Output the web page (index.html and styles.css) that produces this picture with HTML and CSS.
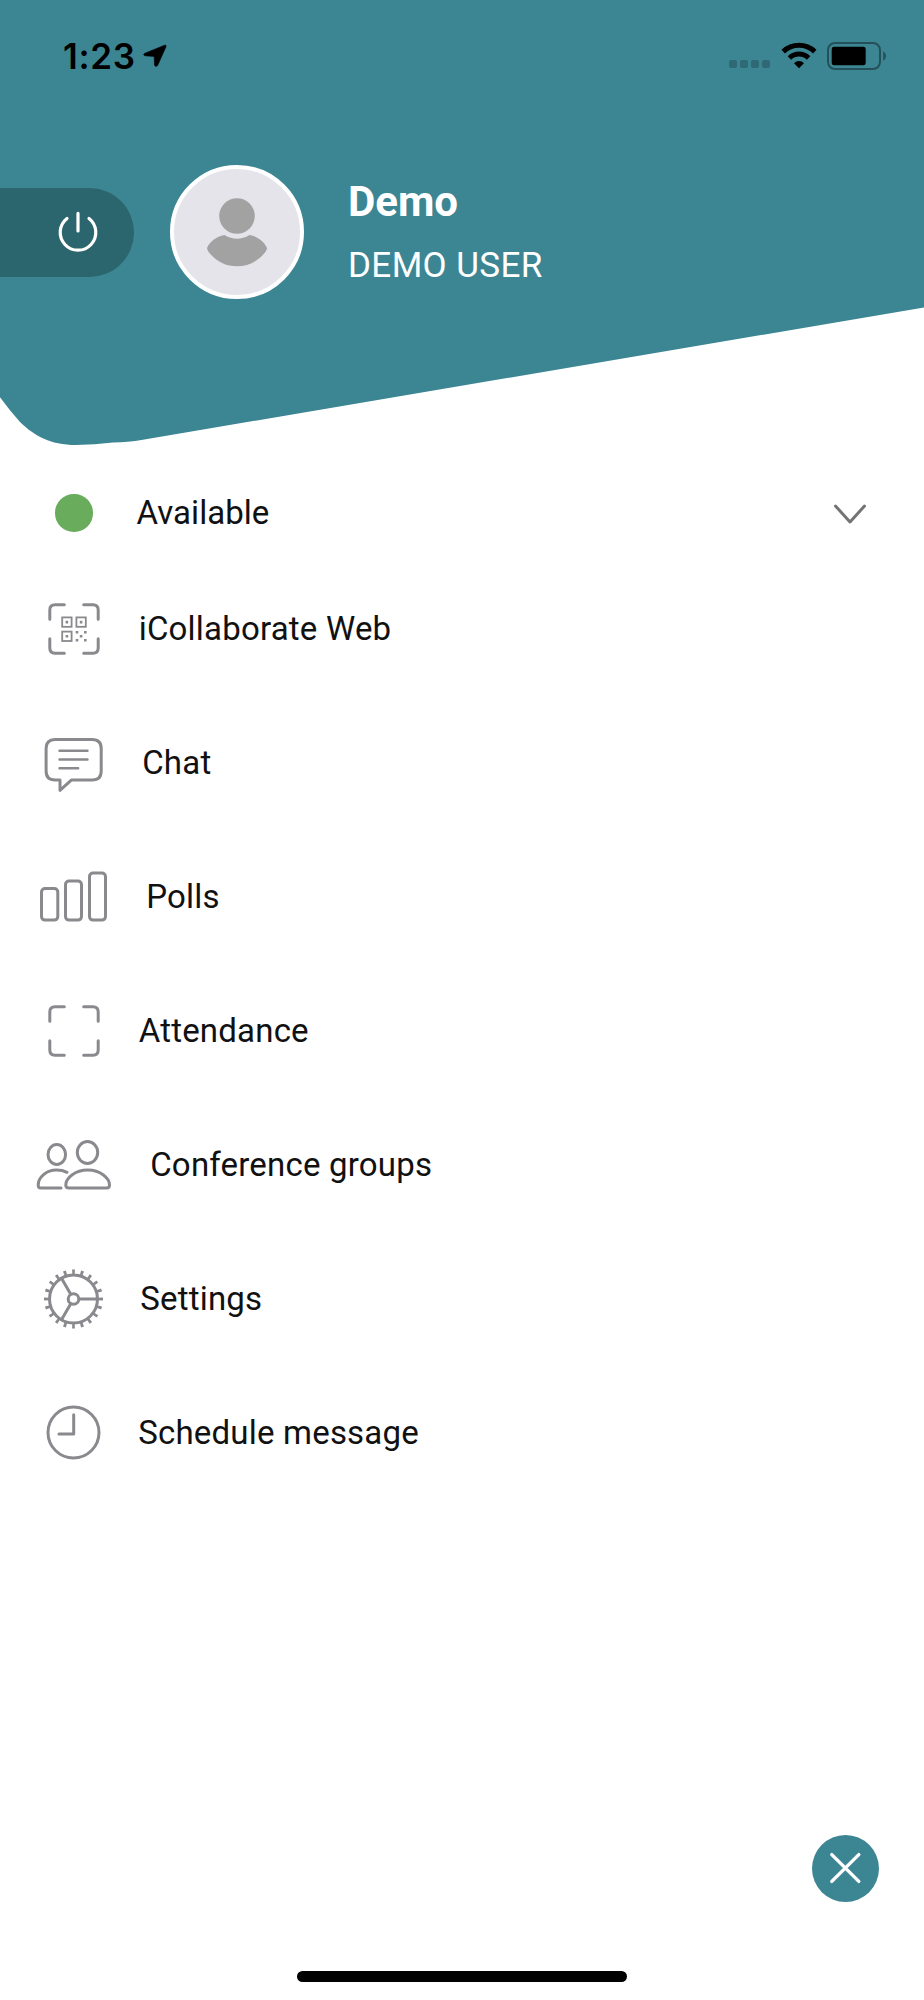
FILE: index.html
```html
<!DOCTYPE html>
<html lang="en">
<head>
<meta charset="utf-8">
<title>Menu</title>
<link rel="stylesheet" href="styles.css">
</head>
<body>
<div class="screen">
  <header class="header">
    <div class="status-bar">
      <span class="time">1:23</span>
      <svg class="location" viewBox="0 0 24 24"><path d="M1.500 9.400 21.600 1.200Q23.600.7 23 2.700L14.600 21.600Q12.600 23.400 11.500 21.200L11.200 12.400 2 11.800Q-.400 10.800 1.500 9.400z"/></svg>
      <div class="signal"><i></i><i></i><i></i><i></i></div>
      <svg class="wifi" viewBox="0 0 36 27"><g fill="none" stroke="#000" stroke-width="5"><path d="M2.2 9.6Q8.8 3.3 18 3.3T33.8 9.6"/><path d="M8.4 16Q12.5 12.1 18 12.1T27.6 16"/></g><path d="M18 26.3 13 21.2Q15 19 18 19T23 21.2z"/></svg>
      <svg class="battery" viewBox="0 0 60 28"><rect x="1" y="1" width="52" height="26" rx="7" fill="none" stroke="#235059" stroke-width="2"/><rect x="4.7" y="4.7" width="34" height="18.6" rx="2.4"/><path d="M56.2 9.3Q59 10.8 59 14T56.2 18.7z" fill="#235059"/></svg>
    </div>
    <div class="profile">
      <div class="logout">
        <svg class="power" viewBox="-22 -22 44 44"><path d="M-11-13.6A17.8 17.8 0 1 0 11-13.6M0-18.6V-1"/></svg>
      </div>
      <div class="avatar">
        <svg viewBox="-33 -37 66 74"><circle cy="-16" r="17.8"/><path d="M-12.5 3Q0 10.5 12.5 3C21 4.500 27.500 10 30 16Q30 18 28 20.500C20 30 11 34.300 0 34.300S-20 30-28 20.500Q-30 18-30 16C-27.500 10-21 4.500-12.500 3z"/></svg>
      </div>
      <div class="identity">
        <div class="name">Demo</div>
        <div class="role">DEMO USER</div>
      </div>
    </div>
  </header>

  <div class="presence">
    <span class="dot"></span>
    <span class="label">Available</span>
    <svg class="chevron" viewBox="0 0 34 22"><path d="M2.5 3 17 19 31.500 3"/></svg>
  </div>

  <nav class="menu">
    <div class="item qr">
      <svg class="icon" viewBox="-27 -30 54 60"><path d="M-24.200-9.700V-19Q-24.200-24.200-19-24.200H-9.700M9.700-24.200H19Q24.200-24.200 24.200-19V-9.700M24.200 9.700V19Q24.200 24.200 19 24.200H9.700M-9.700 24.200H-19Q-24.200 24.200-24.200 19V9.700"/><g class="fine"><rect x="-11.800" y="-11.600" width="9.400" height="9.400"/><rect x="2.400" y="-11.600" width="9.400" height="9.400"/><rect x="-11.800" y="2.600" width="9.400" height="9.400"/></g><path class="solid" d="M-8.400-8.200h2.600v2.600h-2.600zM5.800-8.200h2.600v2.600H5.800zM-8.400 6h2.600v2.600h-2.600zM1.700 1.900h2.600v2.600H1.700zM10 1.900h2.600v2.600H10zM5.800 6h2.600v2.600H5.800zM1.700 10h2.600v2.600H1.700zM10 10h2.600v2.600H10z"/></svg>
      <span class="label">iCollaborate Web</span>
    </div>
    <div class="item chat">
      <svg class="icon" viewBox="-30.500 -30 61 60"><path d="M-18.500-23.500H18.700Q27.700-23.500 27.700-14.500V8.100Q27.700 17.100 18.700 17.100H-2.200L-13.500 27.300V17.100H-18.400Q-27.400 17.100-27.400 8.100V-14.500Q-27.400-23.500-18.500-23.500z"/><path class="lines" d="M-14-12.200H14M-14-3.500H14M-14 5.300H4.700"/></svg>
      <span class="label">Chat</span>
    </div>
    <div class="item polls">
      <svg class="icon" viewBox="-34.500 -30 69 60"><rect x="-32" y="-8.500" width="16.300" height="31.600" rx="3.500"/><rect x="-8" y="-16" width="16" height="39.100" rx="3.500"/><rect x="16" y="-23.900" width="16" height="47" rx="3.500"/></svg>
      <span class="label">Polls</span>
    </div>
    <div class="item attendance">
      <svg class="icon" viewBox="-27 -30 54 60"><path d="M-24.200-9.700V-19Q-24.200-24.200-19-24.200H-9.700M9.700-24.200H19Q24.200-24.200 24.200-19V-9.700M24.200 9.700V19Q24.200 24.200 19 24.200H9.700M-9.700 24.200H-19Q-24.200 24.200-24.200 19V9.700"/></svg>
      <span class="label">Attendance</span>
    </div>
    <div class="item groups">
      <svg class="icon" viewBox="-38.500 -30 77 60"><ellipse cx="-16.700" cy="-10.500" rx="8.800" ry="9.900"/><ellipse cx="14" cy="-12.500" rx="10.200" ry="10.900"/><path d="M-4.500 23.100H33Q36 23.100 36 20C36 13 27 5.100 14.200 5.100S-7.700 13-7.700 20Q-7.700 23.100-4.500 23.100z"/><path d="M-12.500 23.100H-32.700Q-35.300 23.100-35.300 20C-35.300 12-27 5.100-17 5.100Q-11 5.100-6.500 7.300"/></svg>
      <span class="label">Conference groups</span>
    </div>
    <div class="item settings">
      <svg class="icon" viewBox="-28.500 -30 57 60"><circle r="24"/><circle class="teeth" r="27" pathLength="200"/><circle r="5.300"/><path d="M6 0H24M-2.900-4.900-12-20.800M-2.900 4.900-12 20.800"/></svg>
      <span class="label">Settings</span>
    </div>
    <div class="item schedule">
      <svg class="icon" viewBox="-26.500 -30 53 60"><circle cy="-.500" r="25.500"/><path d="M.2-18.200V1H-14.500"/></svg>
      <span class="label">Schedule message</span>
    </div>
  </nav>

  <footer class="footer">
    <div class="close"><svg viewBox="-16 -16 32 32"><path d="M-14.200-13.400 12.800 13.400M12.800-13.400-14.200 13.400"/></svg></div>
    <div class="home-bar"></div>
  </footer>
</div>
</body>
</html>
```
FILE: styles.css
```css
* { box-sizing: border-box; }
body { margin: 0; background: #fff; font-family: Roboto, "Liberation Sans", sans-serif; }
svg { display: block; flex: none; overflow: visible; }

.screen { width: 924px; height: 2000px; display: flex; flex-direction: column; overflow: hidden; }

.header {
  flex: none;
  height: 446px;
  background: #3c8694;
  clip-path: path("M0 0H924V307.500L137 440.700Q130 441.700 113 442.600Q95 445 76 445C50 445 34 435.500 20 422Q10 411 0 397.300z");
}

.status-bar { height: 112px; padding: 0 37px 0 63px; display: flex; align-items: center; }
.time { font: 600 35px/40px Inter, sans-serif; letter-spacing: .7px; width: 80px; }
.location { width: 24px; height: 24px; stroke: #000; stroke-width: .6; }
.signal { display: flex; gap: 3px; margin: 16px 11px 0 auto; }
.signal i { width: 8px; height: 8px; border-radius: 2px; background: #2f6975; }
.wifi { width: 36px; height: 27px; margin: -2px 10px 0 0; }
.battery { width: 60px; height: 28px; margin-top: -1px; }

.profile { display: flex; align-items: center; height: 240px; }
.logout { width: 134px; height: 89px; padding-left: 56px; display: flex; align-items: center; background: #2b656d; border-radius: 0 44.500px 44.500px 0; }
.power { width: 44px; height: 44px; fill: none; stroke: #fff; stroke-width: 3.200; stroke-linecap: round; }
.avatar { width: 134px; height: 134px; margin-left: 35.500px; border: 4px solid #fff; border-radius: 50%; background: #e5e4ea; display: flex; align-items: center; justify-content: center; }
.avatar svg { width: 66px; height: 74px; fill: #a2a2a3; }
.identity { margin: 4px 0 0 44.500px; color: #fff; }
.name { font-size: 42px; font-weight: 700; line-height: 63px; }
.role { font-size: 35px; line-height: 65px; letter-spacing: .4px; }

.label { font-size: 33px; line-height: 40px; letter-spacing: .2px; color: #111; white-space: nowrap; }

.presence { flex: none; display: flex; align-items: center; height: 116px; margin-top: 9px; padding: 0 57px 0 55px; }
.dot { width: 37.500px; height: 37.500px; margin-right: 44px; border-radius: 50%; background: #68ac5c; }
.presence .label { letter-spacing: .05px; }
.chevron { width: 34px; height: 22px; margin: 2px 0 0 auto; fill: none; stroke: #747474; stroke-width: 3; stroke-linecap: round; stroke-linejoin: round; }

.menu { flex: none; margin-top: -9px; }
.item { height: 134px; display: flex; align-items: center; gap: 38px; padding-left: calc(73.700px - var(--icon-width) / 2); }
.icon { width: var(--icon-width); height: 60px; fill: none; stroke: #8a8a8e; stroke-width: 3; stroke-linecap: round; stroke-linejoin: round; }
.fine { stroke-width: 1.800; stroke-linejoin: miter; }
.lines { stroke-width: 2.400; }
.solid { fill: #8a8a8e; stroke: none; }
.teeth { stroke-width: 5; stroke-linecap: butt; stroke-dasharray: 3.200 6.800; stroke-dashoffset: 1.600; }
.qr { --icon-width: 54px; }
.chat { --icon-width: 61px; }
.polls { --icon-width: 69px; }
.attendance { --icon-width: 54px; }
.groups { --icon-width: 77px; }
.settings { --icon-width: 57px; }
.schedule { --icon-width: 53px; }

.footer { flex: 1; display: flex; flex-direction: column; justify-content: space-between; padding: 334.500px 45px 18px; }
.close { width: 67px; height: 67px; align-self: flex-end; border-radius: 50%; background: #3c8694; display: flex; align-items: center; justify-content: center; }
.close svg { width: 32px; height: 32px; fill: none; stroke: #fff; stroke-width: 3.400; stroke-linecap: round; }
.home-bar { width: 330px; height: 11px; align-self: center; border-radius: 6px; background: #000; }
```
